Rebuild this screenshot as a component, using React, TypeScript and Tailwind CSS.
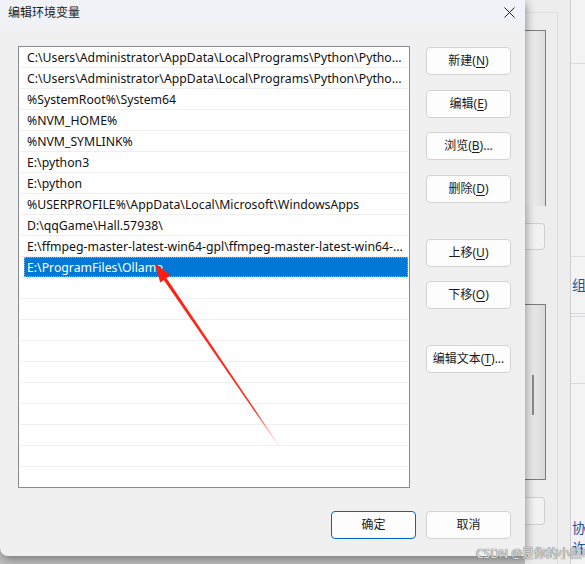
import React from "react";

const paths = [
  "C:\\Users\\Administrator\\AppData\\Local\\Programs\\Python\\Pytho...",
  "C:\\Users\\Administrator\\AppData\\Local\\Programs\\Python\\Pytho...",
  "%SystemRoot%\\System64",
  "%NVM_HOME%",
  "%NVM_SYMLINK%",
  "E:\\python3",
  "E:\\python",
  "%USERPROFILE%\\AppData\\Local\\Microsoft\\WindowsApps",
  "D:\\qqGame\\Hall.57938\\",
  "E:\\ffmpeg-master-latest-win64-gpl\\ffmpeg-master-latest-win64-...",
  "E:\\ProgramFiles\\Ollama",
];

const SELECTED = 10;
const ROW_COUNT = 21;

function Btn({
  label,
  keyChar,
  tail = "",
  primary = false,
  className = "",
}: {
  label: string;
  keyChar?: string;
  tail?: string;
  primary?: boolean;
  className?: string;
}) {
  return (
    <div
      className={`w-[85px] h-[28px] rounded-[4px] bg-[#fdfdfd] flex items-center justify-center text-[12px] text-[#1a1a1a] ${
        primary ? "border border-[#0067c0]" : "border border-[#d3d3d3]"
      } ${className}`}
    >
      <span>
        {label}
        {keyChar && (
          <>
            (<span className="underline underline-offset-2">{keyChar}</span>)
          </>
        )}
        {tail}
      </span>
    </div>
  );
}

function PathList() {
  return (
    <div className="w-[392px] h-[442px] border border-[#878a90] bg-white overflow-hidden flex flex-col text-[12.25px]">
      {Array.from({ length: ROW_COUNT }).map((_, i) => {
        const text = paths[i];
        const selected = i === SELECTED;
        return (
          <div key={i} className="h-[21px] shrink-0 flex flex-col px-[1px]">
            <div className="h-[20px] flex items-center">
              {selected ? (
                <div className="ml-[4px] w-[384px] h-[20px] bg-[#0078d7] border border-dotted border-[#7ab4e6] flex items-center pl-[2px] pt-[2px] text-white">
                  {text}
                </div>
              ) : (
                <div className="pl-[7px] pt-[2px] whitespace-nowrap text-[#111]">{text}</div>
              )}
            </div>
            <div className="h-[1px] bg-[#efefef]" />
          </div>
        );
      })}
    </div>
  );
}

function Arrow() {
  return (
    <svg
      className="absolute left-0 top-0 pointer-events-none"
      width="525"
      height="556"
      viewBox="0 0 525 556"
    >
      <defs>
        <linearGradient id="fade" x1="165" y1="279" x2="279" y2="446" gradientUnits="userSpaceOnUse">
          <stop offset="0" stopColor="#ff1d10" stopOpacity="1" />
          <stop offset="0.8" stopColor="#ff2a1a" stopOpacity="0.95" />
          <stop offset="1" stopColor="#ff6a5a" stopOpacity="0.1" />
        </linearGradient>
      </defs>
      <polygon points="166.4,278.0 163.6,279.8 278.6,446.2 279.4,445.7" fill="url(#fade)" />
      <polygon points="155,263.5 170.6,275.3 160.2,282.4" fill="#ff1d10" />
    </svg>
  );
}

function BehindWindow() {
  return (
    <div className="flex-1 h-[564px] flex bg-[#e6e6e6]">
      <div className="w-[45px] flex flex-col bg-[#ededed]">
        <div className="h-[12px]" />
        <div className="flex-1 flex flex-col border-t border-r border-[#dedede] mr-[12px]">
          <div className="h-[17px]" />
          <div className="w-[21px] h-[176px] border-t border-r border-[#7c7c7c] bg-gradient-to-r from-[#f6f6f6] to-[#dddddd]" />
          <div className="h-[17px]" />
          <div className="w-[20px] h-[27px] rounded-r-[4px] border border-l-0 border-[#cfcfcf] bg-[#f2f2f2]" />
          <div className="h-[54px]" />
          <div className="w-[21px] h-[176px] border-t border-r border-b border-[#7c7c7c] bg-gradient-to-r from-[#f3f3f3] to-[#d9d9d9] flex justify-center pt-[70px]">
            <div className="w-[2px] h-[40px] bg-[#8a8a8a] ml-[-4px]" />
          </div>
          <div className="h-[17px]" />
          <div className="w-[20px] h-[28px] rounded-r-[4px] border border-l-0 border-[#cfcfcf] bg-[#f2f2f2]" />
        </div>
      </div>
      <div className="w-[1px] bg-[#cdcdcd]" />
      <div className="flex-1 bg-[#f3f3f3] flex flex-col overflow-hidden text-[14px] text-[#1b4fa0] leading-none">
        <div className="h-[64px] shrink-0 border-b border-[#dcdcdc]" />
        <div className="h-[193px] shrink-0 border-b border-[#e0e0e0]" />
        <div className="h-[21px] shrink-0" />
        <div className="h-[14px] shrink-0 pl-[1px]">组</div>
        <div className="h-[22px] shrink-0 border-b border-[#d8d8e6]" />
        <div className="h-[3px] shrink-0 border-b border-[#d8d8e6]" />
        <div className="h-[67px] shrink-0 border-b border-[#d9d9d9]" />
        <div className="h-[137px] shrink-0" />
        <div className="h-[14px] shrink-0 pl-[1px]">协</div>
        <div className="h-[6px] shrink-0" />
        <div className="h-[14px] shrink-0 pl-[1px]">许</div>
      </div>
    </div>
  );
}

export default function App() {
  return (
    <div
      className="w-[585px] h-[564px] flex bg-[#bdbdbd] overflow-hidden relative"
      style={{ fontFamily: '"Noto Sans", "Noto Sans CJK SC", sans-serif' }}
    >
      <div className="w-[525px] h-[556px] shrink-0 flex flex-col bg-[#f0f0f0] rounded-bl-[8px] shadow-[2px_3px_8px_rgba(0,0,0,0.35)] relative z-10 text-[12px]">
        <div className="h-[25px] bg-[#f0f2f7] flex items-center justify-between pl-[8px] pr-[10px]">
          <span className="text-[12px] text-[#1a1a1a]">编辑环境变量</span>
          <svg width="11" height="11" viewBox="0 0 11 11">
            <path d="M0.5 0.5 L10.5 10.5 M10.5 0.5 L0.5 10.5" stroke="#222" strokeWidth="1" />
          </svg>
        </div>
        <div className="flex pl-[18px] pt-[21px]">
          <PathList />
          <div className="flex flex-col ml-[16px] pt-[1px]">
            <Btn label="新建" keyChar="N" />
            <Btn label="编辑" keyChar="E" className="mt-[15px]" />
            <Btn label="浏览" keyChar="B" tail="..." className="mt-[14px]" />
            <Btn label="删除" keyChar="D" className="mt-[15px]" />
            <Btn label="上移" keyChar="U" className="mt-[36px]" />
            <Btn label="下移" keyChar="O" className="mt-[14px]" />
            <Btn label="编辑文本" keyChar="T" tail="..." className="mt-[36px]" />
          </div>
        </div>
        <div className="flex justify-end gap-[10px] pr-[14px] mt-[23px]">
          <Btn label="确定" primary />
          <Btn label="取消" />
        </div>
        <Arrow />
      </div>
      <BehindWindow />
      <div className="absolute left-[476px] top-[545px] z-20 text-[12px] text-[#e2e2e2] [text-shadow:0_0_1px_#555,0_0_1px_#777] whitespace-nowrap">
        CSDN @是你的小熊呀
      </div>
    </div>
  );
}
